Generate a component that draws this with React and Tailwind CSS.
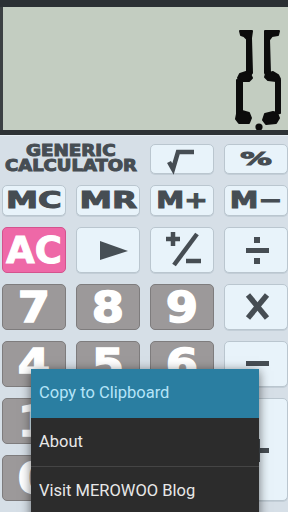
import React from "react";

const LIGHT = "rounded-[5px] bg-[#e8f3fa] border border-[#bac6cf] shadow-[0_1px_0_#c3ced7] flex items-center justify-center text-[#464d53]";
const GRAY = "rounded-[5px] bg-[#9c999a] border border-[#7e7c7d] flex items-center justify-center text-white";
const LBL = "font-['DejaVu_Sans',sans-serif] font-bold leading-none [-webkit-text-stroke:1px_currentColor]";
const DIG = "font-['DejaVu_Sans',sans-serif] font-bold leading-[40px] text-[43px] scale-x-[1.08] [-webkit-text-stroke:1.5px_currentColor]";

function Lcd() {
  return (
    <svg className="absolute inset-0" width="288" height="123" viewBox="0 7 288 123">
      <g fill="#0c0c0c" stroke="#0c0c0c" strokeWidth="2" strokeLinejoin="round">
        <polygon points="237,31 249,31 248,38 245,40 241,36 238,35" />
        <polygon points="244,39 248,38 249,73 246,77 244,73" />
        <polygon points="237,74 243,72 247,74 249,78 246,81 238,81 235,78" />
        <polygon points="234,80 239,81 239,112 234,114" />
        <polygon points="234,114 239,111 246,113 248,118 246,123 236,123 233,119" />
        <polygon points="262,31 276,31 275,35 269,36 266,40 262,39" />
        <polygon points="262,39 266,39 267,73 264,76 262,73" />
        <polygon points="263,74 270,72 275,75 277,79 273,81 265,80 262,77" />
        <polygon points="273,80 277,80 277,113 273,114" />
        <polygon points="262,114 270,112 274,113 276,118 273,123 263,124 260,120" />
        <circle cx="256" cy="127" r="2.6" />
      </g>
    </svg>
  );
}

export default function App() {
  return (
    <div className="relative w-[288px] h-[512px] overflow-hidden bg-[#d6dfe7]">
      <div className="h-[7px] bg-[#2b3034]" />
      <div className="relative h-[123px] bg-[#c3cdc1] border-l-[3px] border-[#3b4043]">
        <Lcd />
      </div>
      <div className="h-[5px] bg-[#2e3336]" />
      <div className="h-[1px] bg-[#e4ecf2]" />

      <div className="mt-[8px] px-[2px] grid grid-cols-[64px_64px_64px_64px] grid-rows-[30px_31px_46px_46px_46px_46px_46px] gap-x-[10px] gap-y-[11px]">
        <div className="col-span-2 flex flex-col items-center justify-center text-[#464d53]">
          <span className={`${LBL} text-[15px] leading-[13px] scale-x-[1.22]`}>GENERIC</span>
          <span className={`${LBL} text-[15px] leading-[13px] scale-x-[1.2]`}>CALCULATOR</span>
        </div>
        <div className={`${LIGHT} relative`}>
          <svg width="64" height="30" viewBox="0 0 64 30" className="absolute left-0 top-0">
            <polyline points="18,17 22,24 27,7 43,7" fill="none" stroke="#464d53" strokeWidth="4.5" strokeLinejoin="miter" />
          </svg>
        </div>
        <div className={LIGHT}>
          <span className={`${LBL} text-[18px] scale-x-[1.75]`}>%</span>
        </div>

        <div className={LIGHT}><span className={`${LBL} text-[23px] scale-x-[1.4]`}>MC</span></div>
        <div className={LIGHT}><span className={`${LBL} text-[23px] scale-x-[1.42]`}>MR</span></div>
        <div className={LIGHT}><span className={`${LBL} text-[23px] scale-x-[1.22]`}>M+</span></div>
        <div className={LIGHT}><span className={`${LBL} text-[23px] scale-x-[1.25]`}>M−</span></div>

        <div className="rounded-[5px] bg-[#ee68a7] border border-[#d4538e] flex items-center justify-center text-white">
          <span className={`${LBL} text-[37px] [-webkit-text-stroke:1.5px_currentColor]`}>AC</span>
        </div>
        <div className={`${LIGHT} relative`}>
          <svg width="64" height="46" viewBox="0 0 64 46" className="absolute left-0 top-0">
            <polygon points="23,13 51,23 23,32" fill="#474f55" />
          </svg>
        </div>
        <div className={`${LIGHT} relative`}>
          <svg width="64" height="46" viewBox="0 0 64 46" className="absolute left-0 top-0">
            <g stroke="#464d53" strokeWidth="4.5" fill="none">
              <line x1="15" y1="11" x2="29" y2="11" />
              <line x1="22" y1="4" x2="22" y2="18" />
              <line x1="23" y1="37" x2="46" y2="6" />
              <line x1="35" y1="33" x2="50" y2="33" />
            </g>
          </svg>
        </div>
        <div className={`${LIGHT} relative`}>
          <svg width="64" height="46" viewBox="0 0 64 46" className="absolute left-0 top-0">
            <g fill="#464d53">
              <rect x="29" y="9" width="6" height="6" />
              <rect x="21" y="20" width="23" height="5" />
              <rect x="29" y="30" width="6" height="6" />
            </g>
          </svg>
        </div>

        <div className={GRAY}><span className={DIG}>7</span></div>
        <div className={GRAY}><span className={DIG}>8</span></div>
        <div className={GRAY}><span className={DIG}>9</span></div>
        <div className={`${LIGHT} relative`}>
          <svg width="64" height="46" viewBox="0 0 64 46" className="absolute left-0 top-0">
            <g stroke="#464d53" strokeWidth="5.5">
              <line x1="23" y1="10" x2="42" y2="33" />
              <line x1="42" y1="10" x2="23" y2="33" />
            </g>
          </svg>
        </div>

        <div className={GRAY}><span className={DIG}>4</span></div>
        <div className={GRAY}><span className={DIG}>5</span></div>
        <div className={GRAY}><span className={DIG}>6</span></div>
        <div className={`${LIGHT} relative`}>
          <svg width="64" height="46" viewBox="0 0 64 46" className="absolute left-0 top-0">
            <rect x="21" y="19" width="23" height="5" fill="#464d53" />
          </svg>
        </div>

        <div className={GRAY}><span className={DIG}>1</span></div>
        <div className={GRAY}><span className={DIG}>2</span></div>
        <div className={GRAY}><span className={DIG}>3</span></div>
        <div className={`${LIGHT} row-span-2 relative`}>
          <svg width="64" height="103" viewBox="0 0 64 103" className="absolute left-0 top-0">
            <g fill="#464d53">
              <rect x="21" y="49" width="23" height="5" />
              <rect x="30" y="40" width="5" height="23" />
            </g>
          </svg>
        </div>

        <div className={GRAY}><span className={DIG}>0</span></div>
        <div className={GRAY}><span className={DIG}>.</span></div>
        <div className={LIGHT}><span className={`${LBL} text-[30px]`}>=</span></div>
      </div>

      <div className="absolute left-[31px] top-[369px] w-[228px] h-[160px] bg-[#2c2c2c] shadow-[0_2px_10px_rgba(0,0,0,0.55)] font-['Roboto',sans-serif] text-[16.5px]">
        <div className="h-[49px] bg-[#2a7ea1] text-[#b5e4f8] flex items-center px-[8px]">Copy to Clipboard</div>
        <div className="h-[49px] text-[#e8e8e8] flex items-center px-[8px] border-b border-[#454545]">About</div>
        <div className="h-[49px] text-[#e8e8e8] flex items-center px-[8px]">Visit MEROWOO Blog</div>
      </div>
    </div>
  );
}
